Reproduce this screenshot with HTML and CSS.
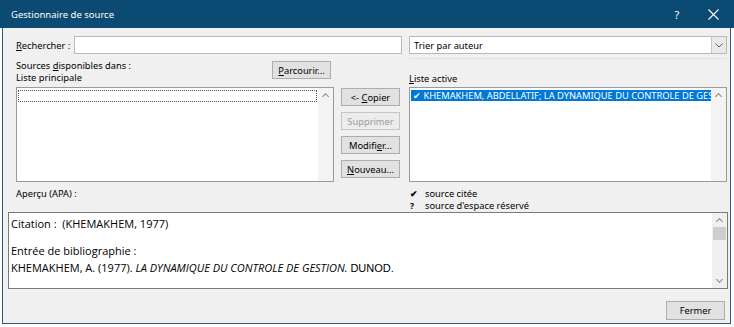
FILE: index.html
```html
<!DOCTYPE html>
<html lang="fr">
<head>
  <meta charset="UTF-8">
  <title>Gestionnaire de source</title>
  <link rel="stylesheet" href="styles.css">
</head>
<body>
  <div class="titlebar">
    <span class="title">Gestionnaire de source</span>
    <span class="tb-help">?</span>
    <span class="tb-close">
      <svg width="11" height="11" viewBox="0 0 11 11"><path d="M0.5 0.5L10.5 10.5M10.5 0.5L0.5 10.5" stroke="#fff" stroke-width="1.1"/></svg>
    </span>
  </div>

  <div class="dialog">
    <div class="search-row">
      <label><u>R</u>echercher :</label>
      <div class="input"></div>
      <div class="combo">
        <span>Trier par auteur</span>
        <span class="combo-btn">
          <svg width="8" height="5" viewBox="0 0 8 5"><path d="M0.5 0.5L4 4L7.5 0.5" fill="none" stroke="#606060" stroke-width="1"/></svg>
        </span>
      </div>
    </div>
    <div class="sep"></div>

    <div class="main">
      <div class="head-left">
        <div class="labels">
          <div>Sources <u>d</u>isponibles dans :</div>
          <div>Liste principale</div>
        </div>
        <button class="btn btn-browse"><u>P</u>arcourir...</button>
      </div>
      <div></div>
      <div class="head-right"><u>L</u>iste active</div>

      <div class="list">
        <div class="list-items">
          <div class="focus-row"></div>
        </div>
        <div class="scroll"><span class="arrow up"></span></div>
      </div>

      <div class="actions">
        <button class="btn">&lt;- <u>C</u>opier</button>
        <button class="btn disabled">Supprimer</button>
        <button class="btn">Modifi<u>e</u>r...</button>
        <button class="btn"><u>N</u>ouveau...</button>
      </div>

      <div class="list">
        <div class="list-items">
          <div class="sel-row">✔ KHEMAKHEM, ABDELLATIF; LA DYNAMIQUE DU CONTROLE DE GESTION</div>
        </div>
        <div class="scroll"><span class="arrow up"></span></div>
      </div>
    </div>

    <div class="legend-row">
      <div class="preview-label">Aperçu (APA) :</div>
      <div class="legend">
        <div><span class="mark">✔</span>source citée</div>
        <div><span class="mark">?</span>source d'espace réservé</div>
      </div>
    </div>

    <div class="preview">
      <div class="preview-text">
        <p>Citation :&nbsp; (KHEMAKHEM, 1977)</p>
        <p class="blank"></p>
        <p>Entrée de bibliographie :</p>
        <p>KHEMAKHEM, A. (1977). <i>LA DYNAMIQUE DU CONTROLE DE GESTION.</i> <span class="arial">DUNOD.</span></p>
      </div>
      <div class="vscroll">
        <span class="arrow up"></span>
        <span class="thumb"></span>
        <span class="fill"></span>
        <span class="arrow down"></span>
      </div>
    </div>

    <div class="footer">
      <button class="btn btn-close">Fermer</button>
    </div>
  </div>
</body>
</html>
```

FILE: styles.css
```css
body { margin: 0; background: #fff; font-family: "Noto Sans", "Open Sans", sans-serif; font-size: 9.3px; color: #000; }
u { text-decoration: underline; text-underline-offset: 1px; }

.titlebar { height: 28px; background: #0b4a72; color: #fff; display: flex; align-items: center; padding: 0 0 0 11px; font-size: 9.5px; }
.title { flex: 1; }
.tb-help { width: 30px; text-align: center; font-size: 11px; }
.tb-close { width: 42px; display: flex; justify-content: center; }

.dialog { margin: 0 3px 0 2px; height: 296px; box-sizing: border-box; background: #f0f0f0; border: 1px solid #2a5d86; border-top: none; padding: 8px 3px 0 13px; }

.search-row { display: grid; grid-template-columns: 51px 328px 318px; column-gap: 7px; align-items: center; height: 18px; }
.search-row label { white-space: nowrap; }
.input { height: 18px; box-sizing: border-box; border: 1px solid #b9b9b9; background: #fff; }
.combo { height: 18px; box-sizing: border-box; border: 1px solid #b9b9b9; background: #fff; display: flex; align-items: center; padding-left: 4px; }
.combo span:first-child { flex: 1; }
.combo-btn { width: 15px; height: 16px; box-sizing: border-box; border-left: 1px solid #c8c8c8; background: #e9e9e9; display: flex; align-items: center; justify-content: center; }
.sep { height: 1px; background: #e3e3e3; margin: 4px 0 0 393px; }

.main { display: grid; grid-template-columns: 317px 59px 318px; grid-template-rows: 28px 95px; column-gap: 8px; }
.main > :nth-child(3), .main > :nth-child(6) { margin-left: 1px; }
.head-left { display: flex; justify-content: space-between; align-items: flex-start; }
.labels { line-height: 12px; padding-top: 1px; white-space: nowrap; }
.head-right { align-self: end; line-height: 12px; padding-bottom: 2px; }

.btn { font-family: inherit; font-size: 9.3px; color: #000; background: #e1e1e1; border: 1px solid #adadad; padding: 0; height: 18px; width: 59px; }
.btn.disabled { color: #9a9a9a; background: #ececec; border-color: #c6c6c6; }
.btn-browse { margin-top: 2px; margin-right: 2px; }

.list { border: 1px solid #9a9a9a; background: #fff; display: flex; box-sizing: border-box; width: 318px; }
.list-items { flex: 1; padding: 2px 1px; overflow: hidden; }
.focus-row { height: 10px; border: 1px dotted #555; }
.sel-row { height: 11px; background: #0078d7; color: #fff; line-height: 11px; white-space: nowrap; overflow: hidden; padding-left: 2px; width: 298px; }
.scroll { width: 15px; background: #f3f3f3; }

.arrow { display: block; height: 14px; position: relative; }
.arrow::after { content: ""; position: absolute; left: 5px; width: 4px; height: 4px; border-left: 1px solid #8a8a8a; border-top: 1px solid #8a8a8a; }
.arrow.up::after { top: 6px; transform: rotate(45deg); }
.arrow.down::after { top: 3px; transform: rotate(225deg); }

.actions { display: flex; flex-direction: column; gap: 6px; padding-top: 1px; }

.legend-row { display: flex; height: 30px; line-height: 12px; padding-top: 6px; box-sizing: border-box; white-space: nowrap; }
.preview-label { width: 393px; }
.mark { display: inline-block; width: 15px; padding-left: 1px; font-weight: bold; font-size: 8.5px; }

.preview { margin-left: -8px; width: 720px; height: 77px; box-sizing: border-box; border: 1px solid #7a7a7a; background: #fff; display: flex; }
.preview-text { flex: 1; padding: 2px 0 0 2px; font-family: "Open Sans", sans-serif; font-size: 11px; }
.preview-text p { margin: 0; line-height: 17px; white-space: nowrap; }
.preview-text p.blank { height: 10px; }
.arial { font-family: "Liberation Sans", sans-serif; }
.vscroll { width: 15px; display: flex; flex-direction: column; background: #f0f0f0; }
.vscroll .thumb { height: 13px; margin: 0 1px; background: #cdcdcd; }
.vscroll .fill { flex: 1; }

.footer { display: flex; justify-content: flex-end; padding: 12px 2px 0 0; }
.btn-close { height: 19px; width: 59px; }
```
